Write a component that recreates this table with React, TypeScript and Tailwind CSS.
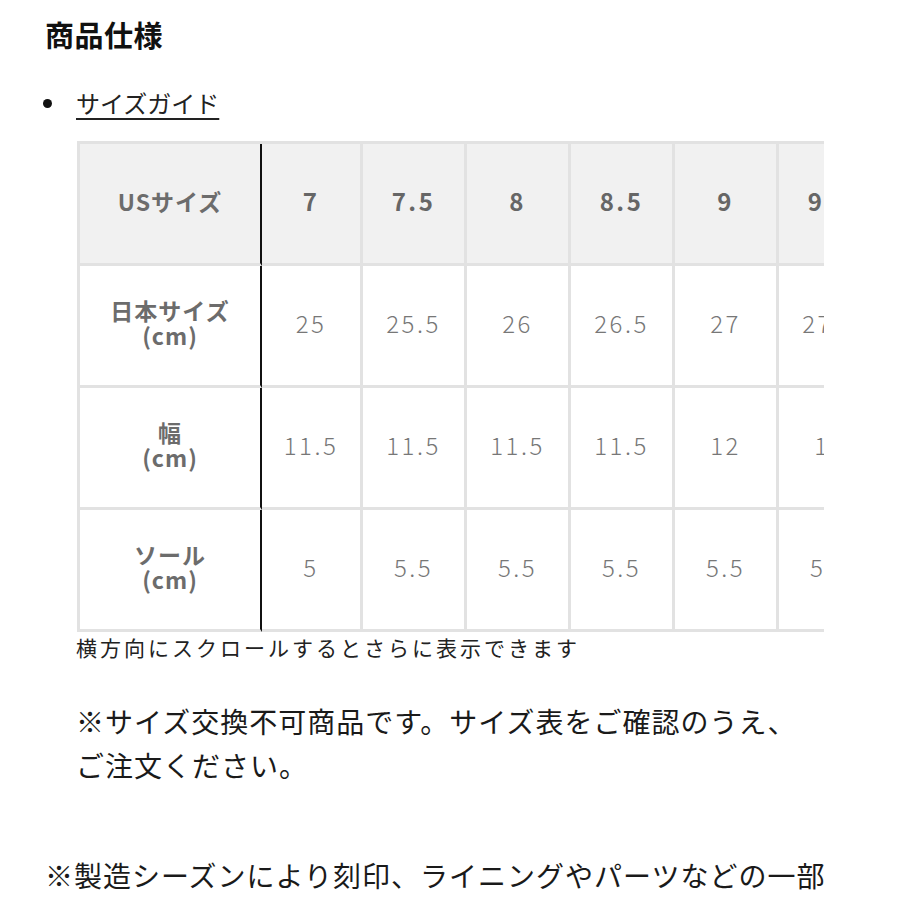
const headers = ["7", "7.5", "8", "8.5", "9", "9.5", "10"]

const rows = [
  { label: ["日本サイズ", "(cm)"], values: ["25", "25.5", "26", "26.5", "27", "27.5", "28"] },
  { label: ["幅", "(cm)"], values: ["11.5", "11.5", "11.5", "11.5", "12", "12", "12"] },
  { label: ["ソール", "(cm)"], values: ["5", "5.5", "5.5", "5.5", "5.5", "5.5", "5.5"] },
]

const font = { fontFamily: '"Noto Sans CJK JP", "Noto Sans", sans-serif' }

function Cell({ children, first, head, index }: { children: React.ReactNode; first?: boolean; head?: boolean; index?: number }) {
  return (
    <div
      className={
        "flex h-[122px] shrink-0 flex-col items-center justify-center border-b-[3px] border-[#e2e2e2] pb-[5px] " +
        (first
          ? "w-[182px] border-r-[2px] border-r-[#111] text-[23px] leading-[25px] font-bold tracking-[1px] text-[#6c6c6c] "
          : (index === 0 ? "w-[101px] " : "w-[104px] ") + "border-r-[3px] text-[24px] ") +
        (head ? "bg-[#f1f1f1] " : "bg-white ") +
        (!first && head ? "font-bold tracking-[2.5px] text-[#666] " : "") +
        (!first && !head ? "font-light tracking-[2.5px] text-[#777] " : "")
      }
    >
      {children}
    </div>
  )
}

export default function App() {
  return (
    <div className="min-h-[900px] w-[900px] bg-white pl-[45px] pt-[14px] text-[#1a1a1a]" style={font}>
      <h2 className="text-[29px] leading-[40px] font-bold tracking-[0.5px] text-[#111]">商品仕様</h2>

      <ul className="mt-[34px]">
        <li className="flex items-center">
          <span className="mr-[24px] ml-[-2px] h-[9px] w-[9px] rounded-full bg-[#111]" />
          <a href="#" className="text-[24px] leading-[30px] text-[#222] underline decoration-[1.5px] underline-offset-[5px]">
            サイズガイド
          </a>
        </li>
      </ul>

      <div className="mt-[23px] ml-[32px] w-[747px] overflow-hidden">
        <div className="w-max border-t-[3px] border-l-[3px] border-[#e2e2e2]">
          <div className="flex">
            <Cell first head>USサイズ</Cell>
            {headers.map((h, i) => (
              <Cell key={i} head index={i}>{h}</Cell>
            ))}
          </div>
          {rows.map((r) => (
            <div key={r.label[0]} className="flex">
              <Cell first>
                <span>{r.label[0]}</span>
                <span>{r.label[1]}</span>
              </Cell>
              {r.values.map((v, i) => (
                <Cell key={i} index={i}>{v}</Cell>
              ))}
            </div>
          ))}
        </div>
      </div>

      <p className="ml-[31px] text-[21px] leading-[30px] tracking-[3px] text-[#222]">横方向にスクロールするとさらに表示できます</p>

      <p className="mt-[37px] ml-[31px] text-[28px] leading-[44px] tracking-[1px] text-[#1a1a1a]">
        ※サイズ交換不可商品です。サイズ表をご確認のうえ、
        <br />
        ご注文ください。
      </p>

      <p className="mt-[66px] text-[28px] leading-[44px] tracking-[1px] text-[#1a1a1a]">
        ※製造シーズンにより刻印、ライニングやパーツなどの一部
      </p>
    </div>
  )
}
